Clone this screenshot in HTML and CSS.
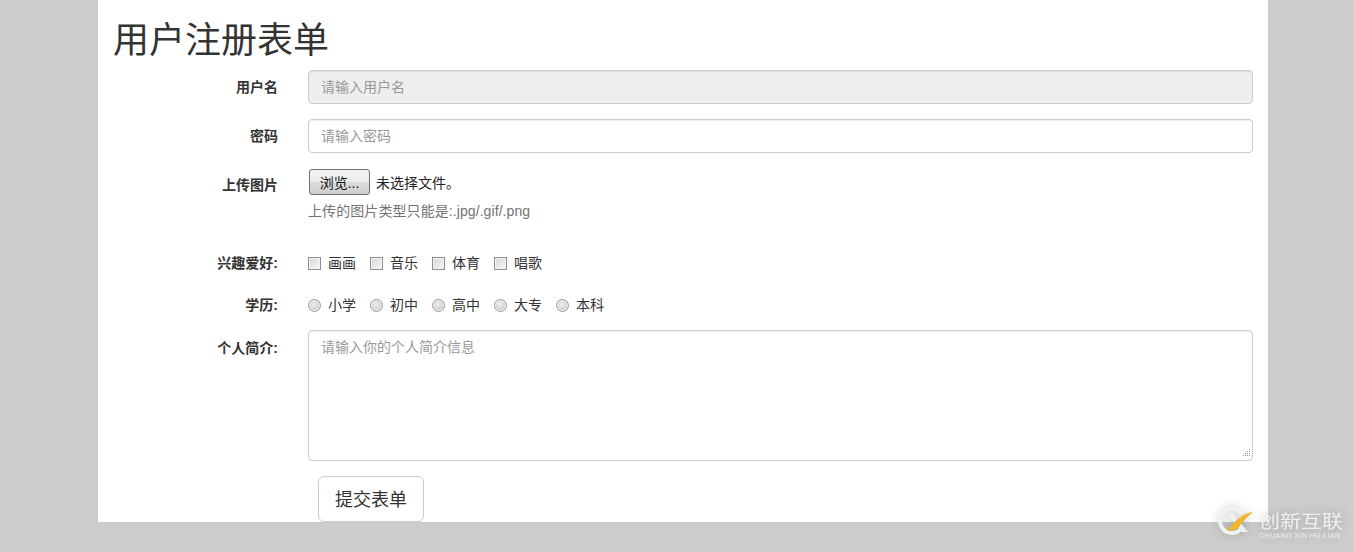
FILE: index.html
```html
<!DOCTYPE html>
<html lang="zh-CN">
<head>
<meta charset="utf-8">
<title>用户注册表单</title>
<link rel="stylesheet" href="styles.css">
</head>
<body>
<div class="container">
  <h1 class="title">用户注册表单</h1>
  <form class="form">
    <div class="group">
      <label class="label">用户名</label>
      <div class="field"><input class="control" type="text" placeholder="请输入用户名" disabled></div>
    </div>
    <div class="group">
      <label class="label">密码</label>
      <div class="field"><input class="control" type="password" placeholder="请输入密码"></div>
    </div>
    <div class="group">
      <label class="label">上传图片</label>
      <div class="field">
        <div class="file"><button class="file-btn" type="button">浏览...</button><span class="file-name">未选择文件。</span></div>
        <p class="help">上传的图片类型只能是:.jpg/.gif/.png</p>
      </div>
    </div>
    <div class="group">
      <label class="label">兴趣爱好:</label>
      <div class="field options">
        <label class="option"><input class="check" type="checkbox">画画</label>
        <label class="option"><input class="check" type="checkbox">音乐</label>
        <label class="option"><input class="check" type="checkbox">体育</label>
        <label class="option"><input class="check" type="checkbox">唱歌</label>
      </div>
    </div>
    <div class="group">
      <label class="label">学历:</label>
      <div class="field options">
        <label class="option"><input class="radio" type="radio" name="edu">小学</label>
        <label class="option"><input class="radio" type="radio" name="edu">初中</label>
        <label class="option"><input class="radio" type="radio" name="edu">高中</label>
        <label class="option"><input class="radio" type="radio" name="edu">大专</label>
        <label class="option"><input class="radio" type="radio" name="edu">本科</label>
      </div>
    </div>
    <div class="group">
      <label class="label label-low">个人简介:</label>
      <div class="field"><textarea class="control area" placeholder="请输入你的个人简介信息"></textarea></div>
    </div>
    <div class="group last">
      <div class="label"></div>
      <div class="field"><button class="submit" type="submit">提交表单</button></div>
    </div>
  </form>
</div>
<div class="watermark">
  <svg class="wm-logo" width="38" height="38" viewBox="0 0 38 38">
    <path d="M26.500 9A14 14 0 1 0 26.500 25L23.200 22.700A10 10 0 1 1 23.200 11.300Z" fill="#f1f1ed"/>
    <path d="M10 9L15 9L31 28L25 28Z" fill="#f1f1ed"/>
    <path d="M36 8C28 9 21 13 10 27C16 27 20 25 22 23C26 17 31 12 36 8Z" fill="#f0b62c"/>
  </svg>
  <div class="wm-text">
    <div class="wm-cn">创新互联</div>
    <div class="wm-en">CHUANG XIN HU LIAN</div>
  </div>
</div>
</body>
</html>
```
FILE: styles.css
```css
* { box-sizing: border-box; }
html, body { margin: 0; padding: 0; }
body {
  height: 552px;
  overflow: hidden;
  background: #cccccc;
  color: #333333;
  font: 14px/20px "Liberation Sans", "Noto Sans CJK SC", sans-serif;
}
.container {
  width: 1170px;
  height: 522px;
  margin-left: 98px;
  padding: 20px 15px 0;
  background: #ffffff;
}
.title {
  margin: 0 0 8px;
  font-size: 36px;
  line-height: 42px;
  font-weight: 400;
}
.form { margin: 0 -15px; }
.group { display: flex; margin-bottom: 15px; }
.group.last { margin-bottom: 0; }
.label {
  flex: 0 0 195px;
  padding: 7px 15px 0;
  text-align: right;
  font-weight: 700;
}
.label-low { padding-top: 8px; }
.field { flex: 1; padding: 0 15px; min-width: 0; }
.control {
  display: block;
  width: 100%;
  height: 34px;
  padding: 6px 12px;
  border: 1px solid #cccccc;
  border-radius: 4px;
  background: #ffffff;
  color: #555555;
  font: inherit;
  box-shadow: inset 0 1px 1px rgba(0,0,0,.075);
}
.control::placeholder { color: #999999; opacity: 1; }
.control:disabled { background: #eeeeee; }
.area { height: 131px; resize: vertical; }
.area::-webkit-resizer {
  background:
    linear-gradient(#9a9a9a, #9a9a9a) 12px 4px / 1px 1px no-repeat,
    linear-gradient(#9a9a9a, #9a9a9a) 12px 6px / 1px 1px no-repeat,
    linear-gradient(#9a9a9a, #9a9a9a) 12px 8px / 1px 1px no-repeat,
    linear-gradient(#9a9a9a, #9a9a9a) 12px 10px / 1px 1px no-repeat,
    linear-gradient(#9a9a9a, #9a9a9a) 10px 6px / 1px 1px no-repeat,
    linear-gradient(#9a9a9a, #9a9a9a) 10px 8px / 1px 1px no-repeat,
    linear-gradient(#9a9a9a, #9a9a9a) 10px 10px / 1px 1px no-repeat,
    linear-gradient(#9a9a9a, #9a9a9a) 8px 8px / 1px 1px no-repeat,
    linear-gradient(#9a9a9a, #9a9a9a) 8px 10px / 1px 1px no-repeat,
    linear-gradient(#9a9a9a, #9a9a9a) 6px 10px / 1px 1px no-repeat;
}
.file { display: flex; align-items: center; height: 28px; }
.file-btn {
  width: 61px;
  height: 26px;
  margin: 1px 6px 1px 1px;
  padding: 1px 0 0;
  border: 1px solid #707070;
  border-radius: 3px;
  background: linear-gradient(#f2f2f2 0%, #ebebeb 50%, #dddddd 50%, #cfcfcf 100%);
  color: #111111;
  font: 14px/20px "Liberation Sans", "Noto Sans CJK SC", sans-serif;
}
.file-name { color: #222222; position: relative; top: 1px; }
.help { margin: 5px 0 10px; color: #737373; line-height: 20px; letter-spacing: .08px; }
.options { display: flex; gap: 14px; padding-top: 7px; height: 27px; }
.option { display: flex; align-items: center; width: 48px; height: 20px; }
.check, .radio {
  appearance: none;
  flex: none;
  width: 13px;
  height: 13px;
  margin: 0 7px 0 0;
  border: 1px solid #8e8e8e;
  background: linear-gradient(135deg, #d6d6d6, #f8f8f8);
  box-shadow: inset 0 0 0 1px #f4f4f4;
}
.radio {
  border-radius: 50%;
  border-color: #9a9a9a;
  background: radial-gradient(circle at 45% 40%, #f0f0f0 0, #cfcfcf 60%, #bdbdbd 100%);
}
.submit {
  display: block;
  width: 106px;
  height: 46px;
  margin-left: 10px;
  padding: 1px 0 0;
  border: 1px solid #cccccc;
  border-radius: 6px;
  background: #ffffff;
  color: #333333;
  font: 18px/24px "Liberation Sans", "Noto Sans CJK SC", sans-serif;
}
.watermark {
  position: absolute;
  left: 1217px;
  top: 504px;
  display: flex;
  gap: 4px;
  filter: drop-shadow(0 0 5px rgba(0,0,0,.22));
}
.wm-logo { flex: none; }
.wm-text { color: #f0f0ee; padding-top: 9px; }
.wm-cn {
  font-size: 21px;
  line-height: 18px;
  white-space: nowrap;
  transform: scaleY(.85);
}
.wm-en { margin-top: 1px; font-size: 7px; line-height: 8px; letter-spacing: .45px; white-space: nowrap; }
```
